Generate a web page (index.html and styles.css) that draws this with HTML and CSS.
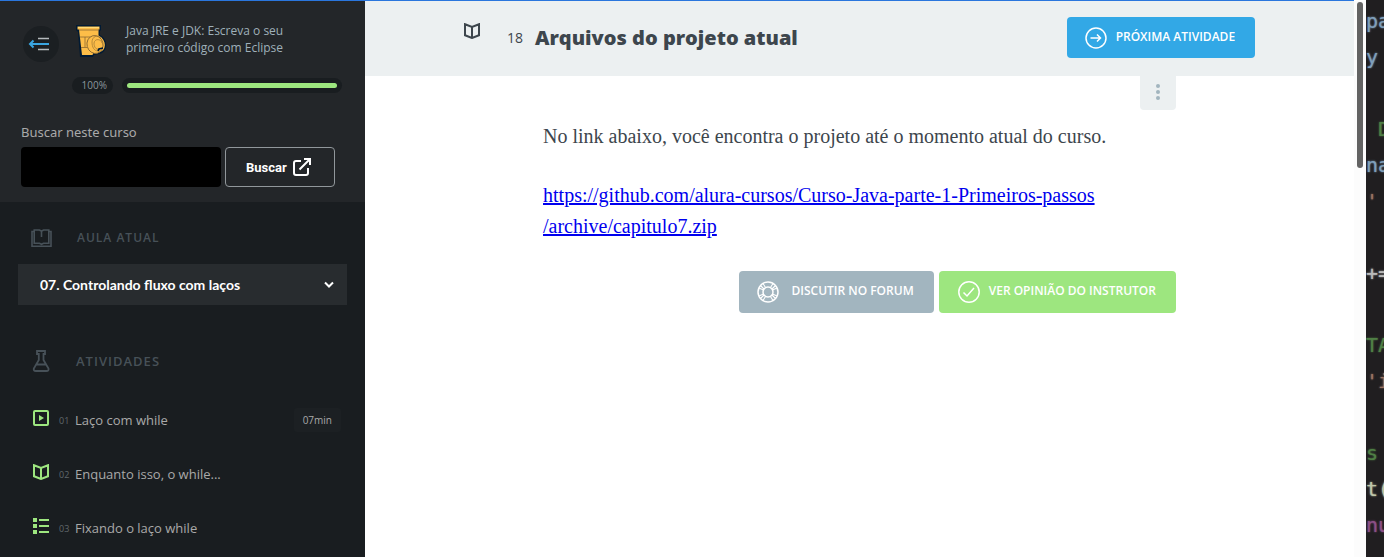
FILE: index.html
```html
<!DOCTYPE html>
<html lang="pt-BR">
<head>
<meta charset="utf-8">
<meta name="viewport" content="width=device-width, initial-scale=1">
<title>Arquivos do projeto atual</title>
<link rel="stylesheet" href="styles.css">
</head>
<body>
<div class="screen">
  <div class="window">
    <aside class="sidebar">
      <header class="course">
        <div class="course-top">
          <button class="collapse" type="button" aria-label="Recolher menu">
            <svg width="22" height="16" viewBox="0 0 22 16"><path d="M10 2.500h11M10 13.500h11" stroke="#b5babd" stroke-width="1.700"/><path d="M2 8h19" stroke="#3aa5e0" stroke-width="2"/><path d="M5.500 4.500 2 8l3.500 3.500" fill="none" stroke="#3aa5e0" stroke-width="2"/></svg>
          </button>
          <svg class="course-logo" width="32" height="34" viewBox="0 0 32 34">
            <path d="M0 1h25v5l-1 1v4c4 2 7 7 6 12-1 4-4 7-7 7l-5 1-1 2H4L2 8 0 6z" fill="#001a34"/>
            <path d="M1.500 2.500h22v3h-1v6l3 2c3 3 4 7 3 10-1 4-5 5-9 5h-2l-1 2.500H6L4 14 3 5.500H1.500z" fill="#fdbd48"/>
            <path d="M2 3.500h21" stroke="#ffdc79"/>
            <path d="M3 6h20M4 13h10M5 23.500h6M9 13v10" fill="none" stroke="#8a6830" stroke-width=".8"/>
            <ellipse cx="19" cy="20.500" rx="8" ry="9" transform="rotate(-15 19 20.500)" fill="#fdbd48" stroke="#8a6830" stroke-width=".9"/>
            <path d="M25 14c-4-4-9-1-9 4s2 9 6 9M26 19c-1-4-7-5-8 0 0 4 2 7 5 6" fill="none" stroke="#a77d35" stroke-width=".8"/>
            <path d="m22 27 1-2 4-1" fill="none" stroke="#001a34" stroke-width="1.700"/>
          </svg>
          <p class="course-name">Java JRE e JDK: Escreva o seu primeiro código com Eclipse</p>
        </div>
        <div class="progress">
          <span class="progress-value">100%</span>
          <div class="progress-track"><div class="progress-fill" style="width:100%"></div></div>
        </div>
        <form class="search">
          <label for="q">Buscar neste curso</label>
          <div class="search-row">
            <input id="q" type="text">
            <button type="button">Buscar
              <svg width="20" height="20" viewBox="0 0 20 20" fill="none" stroke="#fff" stroke-width="2"><path d="M9 4H4Q2 4 2 6v10q0 2 2 2h10q2 0 2-2v-5M7.500 12.500 18 2M12 2h6v6"/></svg>
            </button>
          </div>
        </form>
      </header>
      <section class="current">
        <h2 class="label">
          <svg width="21" height="18" viewBox="0 0 21 18" fill="none" stroke="#475158" stroke-width="1.600"><path d="M3 2.500H1v14.700h19V2.500h-2M3.200 1h5.300l2 1.200 2-1.200h5.300v13.300h-5.300l-2 1-2-1H3.200zM10.500 2v6"/></svg>
          <span>AULA ATUAL</span>
        </h2>
        <div class="picker">
          <select aria-label="Aula atual"><option>07. Controlando fluxo com laços</option></select>
          <svg width="10" height="8" viewBox="0 0 10 8" fill="none" stroke="#fff" stroke-width="2"><path d="m1 1.500 4 4 4-4"/></svg>
        </div>
      </section>
      <section class="activities">
        <h2 class="label">
          <svg width="21" height="22" viewBox="0 0 21 22" fill="none" stroke="#475158" stroke-width="1.800"><path d="M6 1h8v3h-1.500v6l5 8.500q.5 2.500-2 2.500H4.800q-2.500 0-2-2.500l5-8.500V4H6zM5.500 14.500h9"/></svg>
          <span>ATIVIDADES</span>
        </h2>
        <ol class="tasks">
          <li><a href="#t1">
            <svg width="16" height="16" viewBox="0 0 16 16"><rect x="1" y="1" width="14" height="14" rx="1" fill="none" stroke="#9de67f" stroke-width="2"/><path d="M6 5v6l5-3z" fill="#9de67f"/></svg>
            <span class="num">01</span><span class="name">Laço com while</span><span class="time">07min</span></a></li>
          <li><a href="#t2">
            <svg width="16" height="16" viewBox="0 0 16 16" fill="none" stroke="#9de67f" stroke-width="2"><path d="M1 1.200 8 4l7-2.800v11L8 15l-7-2.800zM8 4v11"/></svg>
            <span class="num">02</span><span class="name">Enquanto isso, o while...</span></a></li>
          <li><a href="#t3">
            <svg width="16" height="16" viewBox="0 0 16 16" fill="#9de67f"><path d="M0 0h4v4H0zM0 6h4v4H0zM0 12h4v4H0zM6 1h10v2H6zM6 7h10v2H6zM6 13h10v2H6z"/></svg>
            <span class="num">03</span><span class="name">Fixando o laço while</span></a></li>
        </ol>
      </section>
    </aside>
    <main class="main">
      <header class="bar">
        <div class="bar-inner">
          <svg class="bar-icon" width="16" height="16" viewBox="0 0 16 16" fill="none" stroke="#3d464d" stroke-width="2"><path d="M1 1.200 8 4l7-2.800v11L8 15l-7-2.800zM8 4v11"/></svg>
          <span class="bar-num">18</span>
          <h1>Arquivos do projeto atual</h1>
          <a class="btn next" href="#next">
            <svg width="22" height="22" viewBox="0 0 22 22" fill="none" stroke="#fff" stroke-width="1.500"><circle cx="11" cy="11" r="10"/><path d="M5.500 11h10M12 7.500l3.500 3.500-3.500 3.500"/></svg>
            <span>PRÓXIMA ATIVIDADE</span></a>
        </div>
      </header>
      <article class="content">
        <button class="more" type="button" aria-label="Mais opções">
          <svg width="4" height="18" viewBox="0 0 4 18" fill="#a2b5bf"><circle cx="2" cy="3" r="2"/><circle cx="2" cy="9" r="2"/><circle cx="2" cy="15" r="2"/></svg>
        </button>
        <p>No link abaixo, você encontra o projeto até o momento atual do curso.</p>
        <p><a href="https://github.com/alura-cursos/Curso-Java-parte-1-Primeiros-passos/archive/capitulo7.zip">https://github.com/alura-cursos/Curso-Java-parte-1-Primeiros-passos<wbr>/archive/capitulo7.zip</a></p>
        <div class="actions">
          <button class="btn forum" type="button">
            <svg width="22" height="22" viewBox="0 0 22 22" fill="none" stroke="#fff" stroke-width="1.500"><circle cx="11" cy="11" r="10"/><circle cx="11" cy="11" r="5"/><path d="M7 8 3.500 4.500M8.500 6.500 6 2.500M15 8l3.500-3.500M13.500 6.500 16 2.500M7 14l-3.500 3.500M8.500 15.500 6 19.500M15 14l3.500 3.500M13.500 15.500l2.500 4M6.500 9 2 7M6.500 13 2 15M15.500 9 20 7M15.500 13l4.500 2" stroke-width="1.100"/></svg>
            <span>DISCUTIR NO FORUM</span></button>
          <button class="btn opinion" type="button">
            <svg width="24" height="22" viewBox="0 0 24 22" fill="none" stroke="#fff" stroke-width="1.500"><circle cx="12" cy="11" r="10.200"/><path d="m6.500 11.500 3.500 3.500 7-8"/></svg>
            <span>VER OPINIÃO DO INSTRUTOR</span></button>
        </div>
      </article>
    </main>
    <div class="scroll"><div class="thumb"></div></div>
  </div>
  <pre class="desktop" aria-hidden="true"><span class="blue">pa</span>
<span class="blue">y</span>

 <span class="green">D</span>
<span class="blue">na</span>
<span class="rust">'</span>

+=

<span class="green">TA</span>
<span class="rust">'i</span>

<span class="green">s</span>
<span class="cream">t(</span>
<span class="purple">nu</span></pre>
</div>
</body>
</html>
```

FILE: styles.css
```css
* { box-sizing: border-box; }
body { margin: 0; font-family: "Open Sans", "Noto Sans", sans-serif; color: #3d464d; }
svg { display: block; flex: none; }
h1, h2, p, ol { margin: 0; padding: 0; }
button, input, select { font: inherit; border: 0; margin: 0; }
.screen { display: flex; height: 100vh; overflow: hidden; background: #fff; }
.window { flex: 1; min-width: 0; display: flex; padding-top: 1px; background: linear-gradient(#2a76dd, #2a76dd) 0 0 / calc(100% - 12px) 1px no-repeat #fff; }

.sidebar { width: 365px; flex: none; background: #191d20; overflow: hidden; }
.course { background: #232629; padding: 20px 23px 15px; }
.course-top { display: flex; gap: 17px; align-items: flex-start; }
.collapse { width: 36px; height: 36px; margin-top: 5px; padding: 0 4px 0 0; border-radius: 50%; background: #1b1f22; display: grid; place-items: center; }
.course-logo { margin-top: 3px; }
.course-name { color: #9fb0b9; font-size: 12px; line-height: 17px; max-width: 180px; margin: 1px 0 0 1px; }
.progress { display: flex; align-items: center; gap: 9px; margin: 15px 0 0 49px; }
.progress-value { width: 41px; height: 17px; border-radius: 9px; background: #191d20; color: #8b979e; font-size: 10px; line-height: 17px; text-align: right; padding-right: 6px; }
.progress-track { flex: 1; background: #191d20; border-radius: 8px; padding: 5px; }
.progress-fill { height: 5px; border-radius: 3px; background: #9de67f; }
.search { margin: 28px 0 0 -2px; }
.search label { display: block; color: #a9a9a9; font-family: "Noto Sans", sans-serif; font-size: 13px; line-height: 20px; }
.search-row { display: flex; gap: 4px; margin-top: 5px; }
.search input { width: 200px; height: 40px; border-radius: 4px; background: #000; color: #fff; padding: 0 10px; }
.search button { width: 110px; height: 40px; display: flex; align-items: center; padding: 0 20px; gap: 5px; border: 1px solid #91979b; border-radius: 4px; background: transparent; color: #fff; font: 700 13px Roboto, sans-serif; }

.current { padding: 25px 18px 0; }
.label { display: flex; align-items: center; gap: 25px; color: #475158; font-size: 12px; line-height: 22px; font-weight: 600; letter-spacing: 1px; padding-left: 13px; }
.picker { display: grid; align-items: center; margin-top: 15px; }
.picker > * { grid-area: 1 / 1; }
.picker select { appearance: none; width: 100%; height: 41px; padding: 0 22px; background: #282c2f; color: #fff; font: 700 14px Lato, sans-serif; border-radius: 0; }
.picker svg { justify-self: end; margin-right: 13px; pointer-events: none; }
.activities { padding: 45px 18px 0; }
.activities .label { gap: 24px; font-size: 13px; }
.tasks { list-style: none; margin-top: 21px; padding: 0 6px 0 15px; }
.tasks a { display: flex; align-items: center; height: 54px; color: #a9a9a9; text-decoration: none; font-size: 13px; }
.tasks svg { margin-bottom: 4px; }
.num { padding-left: 10px; width: 26px; color: #60686c; font-size: 9px; }
.name { flex: 1; }
.time { background: #1c2023; border-radius: 3px; font-size: 10px; line-height: 24px; padding: 0 9px; }

.main { flex: 1; min-width: 0; }
.bar { background: #ecf0f1; height: 75px; }
.bar-inner { width: 80%; margin: 0 auto; padding-top: 16px; display: flex; align-items: flex-start; }
.bar-icon { margin: 6px 27px 0 0; }
.bar-num { font-size: 14px; line-height: 42px; width: 28px; }
h1 { flex: 1; font-size: 20px; line-height: 42px; font-weight: 800; }
.btn { display: flex; align-items: center; justify-content: center; gap: 9px; padding: 0 20px 0 18px; height: 42px; border-radius: 4px; color: #fff; font: 600 12px/16px "Open Sans", sans-serif; text-decoration: none; white-space: nowrap; }
.btn span { padding-bottom: 2px; }
.next { background: #32a8e6; height: 41px; }
.content { width: 64%; margin: 0 auto; display: flow-root; font: 20px/31px "Source Serif Pro", "Liberation Serif", serif; }
.more { display: grid; place-items: center; width: 36px; height: 34px; margin-left: auto; background: #ecf0f1; border-radius: 0 0 4px 4px; padding: 0 0 2px; }
.content p { margin: 11px 0 28px; }
.content p + p { margin: 0; }
.content p a { color: #0000ee; }
.actions { display: flex; justify-content: flex-end; gap: 5px; margin-top: 29px; }
.forum { background: #a2b5bf; gap: 12px; }
.opinion { background: #9de67f; gap: 8px; }

.scroll { width: 12px; background: #fcfcfc; padding: 1px 3px; }
.thumb { width: 6px; height: 30%; border-radius: 3px; background: #636363; }
.desktop { width: 18px; flex: none; margin: 0; padding-top: 3px; overflow: hidden; background: #201e20; color: #b9b9b9; font: 20px/36px "DejaVu Sans Mono", monospace; }
.desktop, .desktop span { text-shadow: 0 0 2px currentColor; }
.blue { color: #7f9fbb; }
.green { color: #4f7f45; }
.rust { color: #9a7362; }
.cream { color: #bfc5a8; }
.purple { color: #8b4f86; }
```
